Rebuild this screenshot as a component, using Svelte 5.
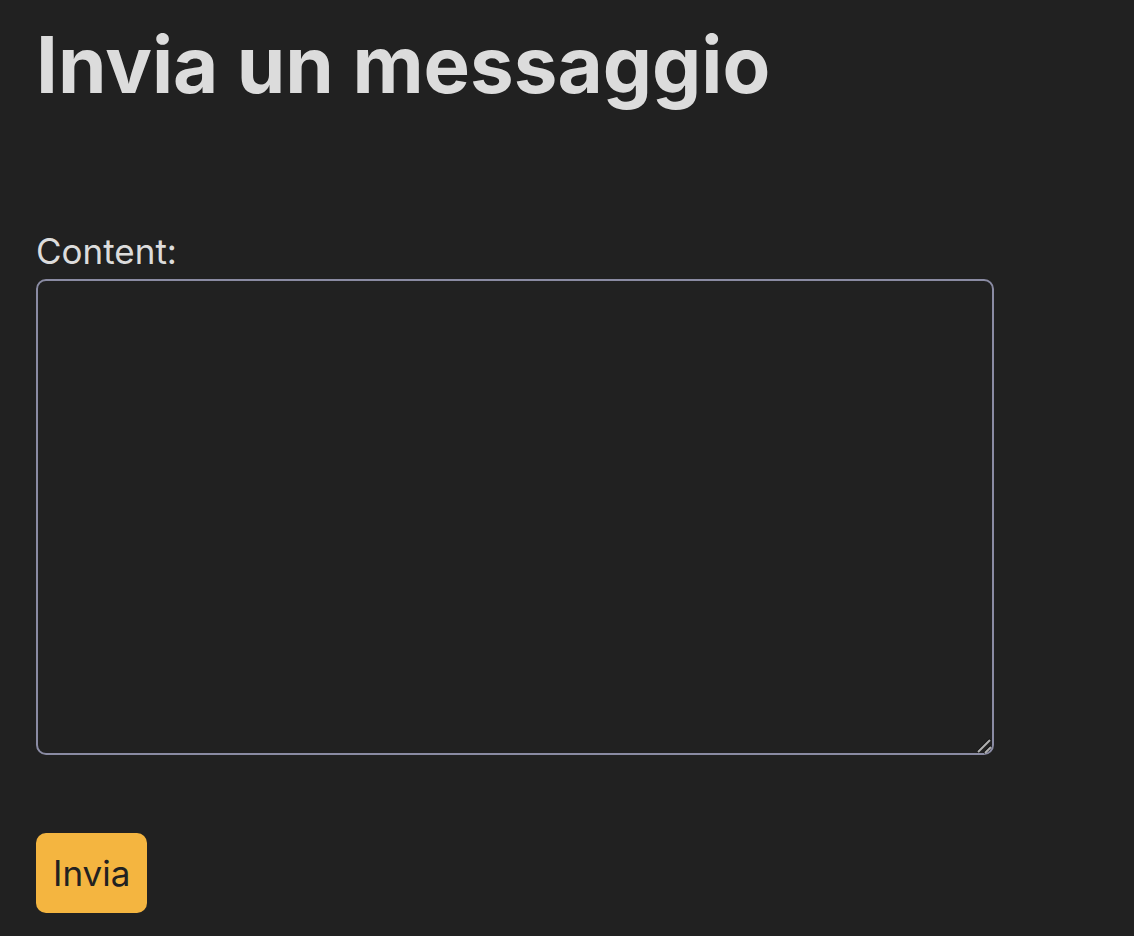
<script>
  let content = $state('');
</script>

<main>
  <h1>Invia un messaggio</h1>
  <form onsubmit={(event) => event.preventDefault()}>
    <label for="content">Content:</label>
    <div class="field">
      <textarea id="content" name="content" bind:value={content}></textarea>
      <svg class="grip" viewBox="0 0 16 16" aria-hidden="true">
        <path class="shade" d="M0 14 13 1M7 15l7-7" />
        <path d="M1 14 13 2M8 15l6-6" />
      </svg>
    </div>
    <button type="submit">Invia</button>
  </form>
</main>

<style>
  :global(body) {
    margin: 0;
    background: #212121;
    color: #dcdcdc;
    font-family: Inter, sans-serif;
  }

  main {
    padding: 16px 34px 24px 36px;
  }

  h1 {
    margin: 0 0 117px;
    font-size: 78px;
    font-weight: 700;
    line-height: 98px;
  }

  form {
    display: flex;
    flex-direction: column;
    align-items: flex-start;
    font-size: 35px;
    line-height: 40px;
  }

  label {
    margin-bottom: 8px;
  }

  .field {
    position: relative;
    width: 90%;
    margin-bottom: 78px;
  }

  textarea {
    display: block;
    box-sizing: border-box;
    width: 100%;
    height: 476px;
    padding: 16px;
    border: 2px solid #8a8ba3;
    border-radius: 10px;
    outline: none;
    background: #212121;
    color: inherit;
    font: inherit;
    resize: none;
  }

  .grip {
    position: absolute;
    right: 1px;
    bottom: 1px;
    width: 16px;
    height: 16px;
    fill: none;
    stroke: #b0b0b0;
    stroke-width: 2;
  }

  .shade {
    stroke: #101010;
  }

  button {
    height: 80px;
    padding: 0 17px;
    border: 0;
    border-radius: 10px;
    background: #f4b540;
    color: #212121;
    font: inherit;
  }
</style>
